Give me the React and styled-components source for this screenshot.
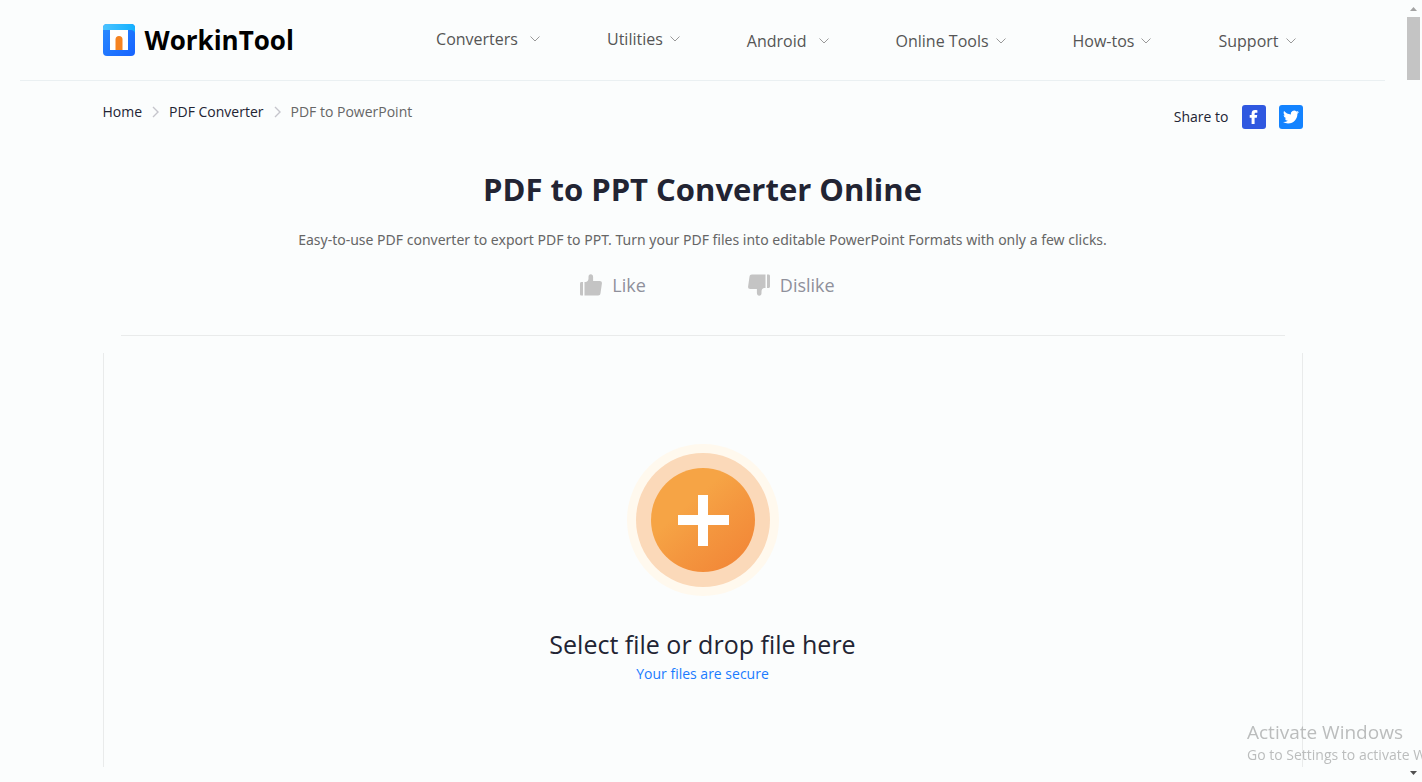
import styled, { createGlobalStyle } from "styled-components";

const menus = [
  { label: "Converters", raised: true, wide: true },
  { label: "Utilities", raised: true },
  { label: "Android", wide: true },
  { label: "Online Tools" },
  { label: "How-tos" },
  { label: "Support" },
];

const App = () => {
  return (
    <>
      <GlobalStyle />
      <Page>
        <Content>
          <Header>
            <Inner>
              <Brand href="#">
                <LogoIcon />
                WorkinTool
              </Brand>
              <Nav>
                {menus.map(({ label, raised, wide }) => (
                  <MenuBtn key={label} type="button" $raised={raised} $wide={wide}>
                    {label}
                    <ChevronDown />
                  </MenuBtn>
                ))}
              </Nav>
            </Inner>
          </Header>
          <Main>
            <TopBar>
              <Breadcrumb aria-label="Breadcrumb">
                <Crumb href="#">Home</Crumb>
                <ChevronRight />
                <Crumb href="#">PDF Converter</Crumb>
                <ChevronRight />
                <Current>PDF to PowerPoint</Current>
              </Breadcrumb>
              <Share>
                Share to
                <ShareLink href="#" aria-label="Facebook" $color="#2f58e0">
                  <svg width="24" height="24" viewBox="0 0 24 24">
                    <path
                      fill="#fff"
                      d="M9.600 19v-6.300H7.700V10h1.900V8.400C9.600 6.200 10.900 5 13 5c.9 0 2 .1 2.400.2v2.500h-1.400c-1.100 0-1.400.6-1.400 1.300v1h2.600l-.4 2.700h-2.200V19z"
                    />
                  </svg>
                </ShareLink>
                <ShareLink href="#" aria-label="Twitter" $color="#1383ff">
                  <svg width="16" height="16" viewBox="0 0 24 24">
                    <path
                      fill="#fff"
                      d="M23.950 4.570a10 10 0 0 1-2.820.77 4.960 4.960 0 0 0 2.160-2.720c-.95.56-2 .96-3.130 1.180a4.920 4.920 0 0 0-8.380 4.480C7.690 8.100 4.070 6.130 1.640 3.160a4.820 4.820 0 0 0-.67 2.480c0 1.710.87 3.210 2.190 4.100a4.900 4.900 0 0 1-2.230-.62v.06a4.920 4.920 0 0 0 3.950 4.830 5 5 0 0 1-2.210.08 4.940 4.940 0 0 0 4.600 3.420A9.870 9.870 0 0 1 0 19.540a13.990 13.990 0 0 0 7.550 2.210c9.050 0 14-7.500 14-13.980 0-.21 0-.42-.02-.63a9.940 9.940 0 0 0 2.460-2.550z"
                    />
                  </svg>
                </ShareLink>
              </Share>
            </TopBar>
            <Title>PDF to PPT Converter Online</Title>
            <Desc>
              Easy-to-use PDF converter to export PDF to PPT. Turn your PDF files into editable PowerPoint Formats with
              only a few clicks.
            </Desc>
            <Votes>
              <VoteBtn type="button">
                <Thumb />
                Like
              </VoteBtn>
              <VoteBtn type="button">
                <Thumb down />
                Dislike
              </VoteBtn>
            </Votes>
            <DropZone>
              <UploadBtn type="button" aria-label="Select file">
                <PlusIcon />
              </UploadBtn>
              <DropText>Select file or drop file here</DropText>
              <SecureLink href="#">Your files are secure</SecureLink>
            </DropZone>
          </Main>
        </Content>
        <ScrollRail aria-hidden="true">
          <svg width="7" height="4" viewBox="0 0 7 4">
            <path fill="#a3a3a3" d="M3.500 0L7 4H0z" />
          </svg>
          <ScrollThumb />
          <svg width="7" height="4" viewBox="0 0 7 4">
            <path fill="#505050" d="M3.500 4L7 0H0z" />
          </svg>
        </ScrollRail>
      </Page>
      <Watermark>
        <WatermarkTitle>Activate Windows</WatermarkTitle>
        <WatermarkText>Go to Settings to activate Windows.</WatermarkText>
      </Watermark>
    </>
  );
};

const LogoIcon = () => (
  <svg width="32" height="32" viewBox="0 0 32 32">
    <defs>
      <linearGradient id="logoTop" x1="0" x2="1">
        <stop offset="0" stopColor="#4cc3ff" />
        <stop offset="1" stopColor="#12b0ff" />
      </linearGradient>
      <linearGradient id="logoBody" x1="0" y1="0" x2="1" y2="1">
        <stop offset="0" stopColor="#2a8cff" />
        <stop offset="1" stopColor="#1663ff" />
      </linearGradient>
    </defs>
    <rect width="32" height="32" rx="4" fill="url(#logoBody)" />
    <path fill="url(#logoTop)" d="M4 0h24a4 4 0 0 1 4 4v6c0-3-2-4-5-4H0V4a4 4 0 0 1 4-4z" />
    <path fill="#fff" d="M7 6h18v20H7z" />
    <path fill="#f58220" d="M12.500 26V15.500a3.500 3.500 0 0 1 7 0V26z" />
  </svg>
);

const ChevronDown = () => (
  <svg width="10" height="6" viewBox="0 0 10 6" fill="none" stroke="#999">
    <path d="M.5.5L5 5 9.500.5" />
  </svg>
);

const ChevronRight = () => (
  <svg width="7" height="12" viewBox="0 0 7 12" fill="none" stroke="#c5c5cc" strokeWidth="1.400">
    <path d="M1 1l5 5-5 5" />
  </svg>
);

const Thumb = ({ down }) => (
  <svg width="22" height="22" viewBox="0 0 22 22" fill="#c4c4c4">
    <g transform={down ? "rotate(180 11 11)" : undefined}>
      <path d="M1.500 8H3v13.500H1.500C.6 21.500 0 21 0 20V9.500C0 8.600.6 8 1.500 8z" />
      <path d="M4.500 8h1c1.600 0 3-1.400 3-3.500V2.800C8.500 1.200 9.400.3 10.700.3c1.500 0 2.400 1 2.400 2.600v4.200h6.700c1.500 0 2.300 1 2.100 2.400l-1.400 9.800c-.2 1.400-1 2.200-2.400 2.200H4.500z" />
    </g>
  </svg>
);

const PlusIcon = () => (
  <svg width="154" height="154" viewBox="0 0 154 154">
    <defs>
      <linearGradient id="plusFill" x1="0.150" y1="0.100" x2="0.850" y2="0.900">
        <stop offset="0.300" stopColor="#f6a445" />
        <stop offset="0.600" stopColor="#f4973f" />
        <stop offset="1" stopColor="#f28838" />
      </linearGradient>
    </defs>
    <circle cx="77" cy="77" r="76" fill="#fff9ee" />
    <circle cx="77" cy="77" r="67" fill="#fbd9b9" />
    <circle cx="77" cy="77" r="52" fill="url(#plusFill)" />
    <path fill="#fff" d="M72 52h10v20h21v10H82v21H72V82H52V72h20z" />
  </svg>
);

const GlobalStyle = createGlobalStyle`
  * {
    box-sizing: border-box;
  }

  body {
    margin: 0;
    overflow: hidden;
    background-color: #fbfdfd;
    font-family: "Open Sans", "Noto Sans", sans-serif;
    color: #222433;
  }

  a {
    color: inherit;
    text-decoration: none;
  }

  button {
    border: 0;
    padding: 0;
    background: none;
    font-family: inherit;
    cursor: pointer;
  }

  svg {
    display: block;
    flex-shrink: 0;
  }
`;

const Page = styled.div`
  display: flex;
  height: 100vh;
  overflow: hidden;
`;

const Content = styled.div`
  flex: 1;
  min-width: 0;
`;

const Header = styled.header`
  margin: 0 20px;
  border-bottom: 1px solid #eaf0f2;
`;

const Inner = styled.div`
  display: flex;
  align-items: center;
  justify-content: space-between;
  max-width: 1200px;
  height: 80px;
  margin: 0 auto;
  padding-right: 7px;
`;

const Brand = styled.a`
  display: flex;
  align-items: center;
  gap: 10px;
  font-size: 26px;
  font-weight: 700;
  color: #000;
`;

const Nav = styled.nav`
  display: flex;
  gap: 67px;
  padding-top: 2px;
`;

const MenuBtn = styled.button`
  display: flex;
  align-items: center;
  gap: ${({ $wide }) => ($wide ? "12px" : "7px")};
  padding-bottom: ${({ $raised }) => ($raised ? "4px" : "0")};
  font-size: 16px;
  line-height: 24px;
  color: #555;
`;

const Main = styled.main`
  max-width: 1200px;
  margin: 0 auto;
`;

const TopBar = styled.div`
  display: flex;
  align-items: flex-start;
  justify-content: space-between;
  padding-top: 20px;
  font-size: 14px;
  line-height: 22px;
`;

const Breadcrumb = styled.nav`
  display: flex;
  align-items: center;
  gap: 10px;
`;

const Crumb = styled.a`
  color: #222433;
`;

const Current = styled.span`
  color: #666;
`;

const Share = styled.div`
  display: flex;
  align-items: center;
  gap: 13px;
  padding-top: 4px;
`;

const ShareLink = styled.a`
  display: flex;
  align-items: center;
  justify-content: center;
  width: 24px;
  height: 24px;
  border-radius: 3px;
  background-color: ${({ $color }) => $color};
`;

const Title = styled.h1`
  margin: 38px 0 0;
  font-size: 31px;
  font-weight: 700;
  line-height: 44px;
  text-align: center;
`;

const Desc = styled.p`
  margin: 17px 0 0;
  font-family: "Noto Sans", "Open Sans", sans-serif;
  font-size: 14px;
  line-height: 24px;
  text-align: center;
  color: #666;
`;

const Votes = styled.div`
  display: flex;
  justify-content: center;
  gap: 102px;
  margin-top: 20px;
  padding-left: 10px;
`;

const VoteBtn = styled.button`
  display: flex;
  align-items: center;
  gap: 10px;
  font-size: 18px;
  line-height: 26px;
  color: #8f909b;
`;

/* edges stop short of the rounded corners */
const DropZone = styled.section`
  display: flex;
  flex-direction: column;
  align-items: center;
  height: 450px;
  margin-top: 37px;
  padding-top: 108px;
  background-image:
    linear-gradient(#e9ebeb, #e9ebeb), linear-gradient(#e9ebeb, #e9ebeb), linear-gradient(#e9ebeb, #e9ebeb),
    linear-gradient(#e9ebeb, #e9ebeb);
  background-position: top, bottom, left, right;
  background-size:
    calc(100% - 36px) 1px,
    calc(100% - 36px) 1px,
    1px calc(100% - 36px),
    1px calc(100% - 36px);
  background-repeat: no-repeat;
`;

const UploadBtn = styled.button`
  border-radius: 50%;
`;

const DropText = styled.p`
  margin: 29px 0 0;
  font-size: 25px;
  line-height: 36px;
`;

const SecureLink = styled.a`
  font-size: 14px;
  line-height: 24px;
  color: #1a7bff;
`;

const ScrollRail = styled.div`
  display: flex;
  flex-direction: column;
  align-items: center;
  width: 17px;
  padding: 7px 0;
`;

const ScrollThumb = styled.div`
  width: 13px;
  height: 63px;
  margin: 6px 0 auto;
  background-color: #c4c4c4;
`;

const Watermark = styled.div`
  position: fixed;
  right: 0;
  bottom: 16px;
  width: 175px;
  overflow: hidden;
  white-space: nowrap;
  color: #bbbdbd;
  pointer-events: none;
`;

const WatermarkTitle = styled.div`
  font-size: 19px;
  line-height: 24px;
`;

const WatermarkText = styled.div`
  font-size: 14px;
  line-height: 22px;
`;

export default App;
